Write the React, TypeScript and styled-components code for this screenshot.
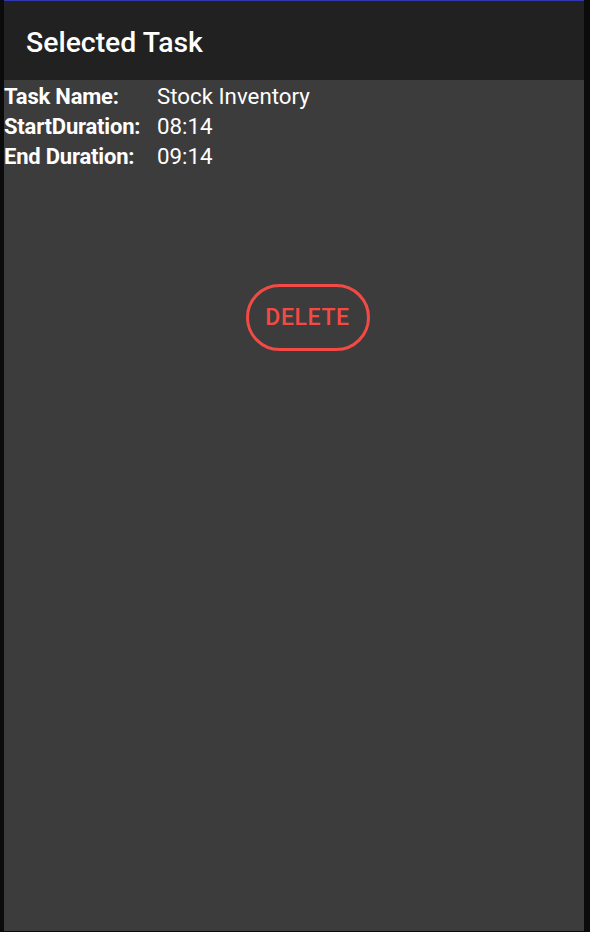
import styled, { createGlobalStyle } from 'styled-components';
import { Fragment } from 'react';

const GlobalStyle = createGlobalStyle`
  html, body {
    margin: 0;
    padding: 0;
    height: 100%;
    background: #0b0b0b;
  }
  #root {
    height: 100%;
  }
`;

const Screen = styled.div`
  height: 932px;
  display: flex;
  flex-direction: column;
  margin: 0 6px 0 4px;
  font-family: Roboto, 'Noto Sans', sans-serif;
  color: #fff;
`;

const TopLine = styled.div`
  height: 1px;
  background: #3137b0;
`;

const Header = styled.header`
  height: 79px;
  background: #212121;
  display: flex;
  align-items: center;
  padding-left: 22px;
`;

const Title = styled.h1`
  margin: 0;
  font-size: 28.4px;
  font-weight: 500;
  margin-top: 3px;
`;

const Body = styled.main`
  flex: 1;
  background: #3c3c3c;
  padding-top: 1px;
  margin-bottom: 1px;
  display: flex;
  flex-direction: column;
`;

const InfoGrid = styled.div`
  display: grid;
  grid-template-columns: 153px 1fr;
  grid-auto-rows: 30px;
  align-items: center;
  font-size: 22px;
`;

const Label = styled.span`
  font-weight: 700;
  letter-spacing: -0.2px;
`;

const Value = styled.span`
  font-weight: 400;
  font-size: 22.3px;
`;

const Actions = styled.div`
  display: flex;
  justify-content: center;
  padding-top: 113px;
  padding-left: 27px;
`;

const DeleteButton = styled.button`
  width: 124px;
  height: 67px;
  border: 3.5px solid #f44a46;
  border-radius: 34px;
  background: transparent;
  color: #f44a46;
  font-family: Roboto, 'Noto Sans', sans-serif;
  font-size: 23px;
  font-weight: 500;
  letter-spacing: 0.6px;
  cursor: pointer;
`;

const rows = [
  { label: 'Task Name:', value: 'Stock Inventory' },
  { label: 'StartDuration:', value: '08:14' },
  { label: 'End Duration:', value: '09:14' },
];

const App = () => {
  return (
    <>
      <GlobalStyle />
      <Screen>
        <TopLine />
        <Header>
          <Title>Selected Task</Title>
        </Header>
        <Body>
          <InfoGrid>
            {rows.map(r => (
              <Fragment key={r.label}>
                <Label>{r.label}</Label>
                <Value>{r.value}</Value>
              </Fragment>
            ))}
          </InfoGrid>
          <Actions>
            <DeleteButton>DELETE</DeleteButton>
          </Actions>
        </Body>
      </Screen>
    </>
  );
};

export default App;
